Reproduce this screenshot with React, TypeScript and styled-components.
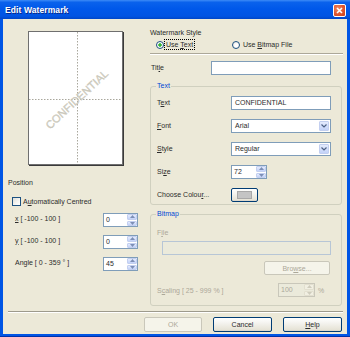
import React from 'react';
import styled, { createGlobalStyle, css } from 'styled-components';

const GlobalStyle = createGlobalStyle`
  html, body {
    margin: 0;
    padding: 0;
    background: #ffffff;
  }
  body {
    font-family: 'Liberation Sans', Arial, sans-serif;
    font-size: 7px;
    color: #2b2b2b;
  }
`;

const Window = styled.div`
  width: 350px;
  height: 337px;
  background: #0055e5;
  display: flex;
  flex-direction: column;
  overflow: hidden;
  border-bottom: 1px solid #0031a8;
  box-sizing: border-box;
`;

const TitleBar = styled.div`
  height: 19px;
  flex: none;
  display: flex;
  align-items: center;
  justify-content: space-between;
  padding: 1px 4px 0 5px;
  box-sizing: border-box;
  background: linear-gradient(
    #3d8bf7 0%,
    #0a62ec 12%,
    #0058ea 45%,
    #0054e3 85%,
    #0046c8 100%
  );
`;

const TitleText = styled.span`
  color: #ffffff;
  font-weight: bold;
  font-size: 8.5px;
  text-shadow: 1px 1px 0 #0a2a8a;
  letter-spacing: 0.1px;
`;

const CloseButton = styled.div`
  width: 13px;
  height: 13px;
  box-sizing: border-box;
  border: 1px solid #ffffff;
  border-radius: 2px;
  background: radial-gradient(circle at 35% 35%, #f08a62 0%, #e0562f 55%, #c8401c 100%);
  display: flex;
  align-items: center;
  justify-content: center;
`;

const Client = styled.div`
  margin: 0 3px 2px;
  height: 315px;
  background: #ece9d8;
  display: flex;
  flex-direction: column;
`;

const Main = styled.div`
  display: flex;
  height: 286px;
`;

const LeftCol = styled.div`
  width: 147px;
  display: flex;
  flex-direction: column;
`;

const RightCol = styled.div`
  width: 193px;
  display: flex;
  flex-direction: column;
`;

const Preview = styled.div`
  margin: 12px 0 0 25px;
  width: 95px;
  height: 134px;
  box-sizing: border-box;
  background: #ffffff;
  border: 1px solid #6f6f6f;
  box-shadow: 1px 1px 0 #3a3a3a;
`;

const Label = styled.div<{ $disabled?: boolean }>`
  height: 12px;
  line-height: 12px;
  white-space: nowrap;
  color: ${(p) => (p.$disabled ? '#aca899' : 'inherit')};
`;

const PositionLabel = styled(Label)`
  margin: 12px 0 0 5px;
`;

const CheckRow = styled.label`
  margin: 6px 0 0 9px;
  height: 12px;
  display: flex;
  align-items: center;
  gap: 2px;
  white-space: nowrap;
`;

const CheckBox = styled.span`
  width: 9px;
  height: 9px;
  box-sizing: border-box;
  border: 1px solid #1c5180;
  background: linear-gradient(135deg, #dcdcd7 0%, #f6f6f3 60%, #ffffff 100%);
`;

const SpinGrid = styled.div`
  margin: 6px 0 0 12px;
  display: grid;
  grid-template-columns: 88px 35px;
  grid-auto-rows: 14px;
  row-gap: 8px;
  align-items: center;
`;

const SpinLabel = styled(Label)`
  margin-top: -3px;
`;

const Spin = styled.div<{ $w: number; $disabled?: boolean }>`
  width: ${(p) => p.$w}px;
  height: 14px;
  box-sizing: border-box;
  display: flex;
  border: 1px solid ${(p) => (p.$disabled ? '#c9c7ba' : '#7f9db9')};
  background: ${(p) => (p.$disabled ? '#ebeadb' : '#ffffff')};
  color: ${(p) => (p.$disabled ? '#aca899' : 'inherit')};
`;

const SpinValue = styled.div`
  flex: 1;
  line-height: 12px;
  padding-left: 2px;
`;

const SpinButtons = styled.div<{ $disabled?: boolean }>`
  width: 10px;
  display: flex;
  flex-direction: column;
  gap: 1px;
  padding: 0 0 0 1px;
  background: ${(p) => (p.$disabled ? '#ebeadb' : '#ffffff')};
`;

const SpinHalf = styled.div<{ $disabled?: boolean }>`
  flex: 1;
  display: flex;
  align-items: center;
  justify-content: center;
  border-radius: 1px;
  ${(p) =>
    p.$disabled
      ? css`
          background: #f1efe2;
          border: 1px solid #e2dfcf;
        `
      : css`
          background: linear-gradient(#e4ebfd, #c3d2f8);
          border: 1px solid #c3cff0;
        `}
  box-sizing: border-box;
`;

const Heading = styled(Label)`
  margin-top: 8px;
`;

const RadioRow = styled.div`
  margin: 1px 0 0 6px;
  height: 12px;
  display: flex;
  align-items: center;
`;

const RadioItem = styled.label<{ $w?: number }>`
  display: flex;
  align-items: center;
  gap: 1px;
  white-space: nowrap;
  width: ${(p) => (p.$w ? `${p.$w}px` : 'auto')};
`;

const RadioCircle = styled.span<{ $checked?: boolean }>`
  width: 8px;
  height: 8px;
  box-sizing: border-box;
  border-radius: 50%;
  border: 1px solid #1c5180;
  background: ${(p) =>
    p.$checked
      ? 'radial-gradient(circle, #3ed13e 0%, #21a121 35%, #ffffff 42%, #ffffff 100%)'
      : 'radial-gradient(circle at 60% 60%, #ffffff 30%, #e0e0da 100%)'};
`;

const FocusText = styled.span`
  outline: 1px dotted #000;
  outline-offset: 0;
  padding: 0 1px;
  line-height: 9px;
`;

const Divider = styled.div`
  margin-top: 4px;
  height: 2px;
  box-sizing: border-box;
  border-top: 1px solid #aca899;
  border-bottom: 1px solid #ffffff;
`;

const TitleRow = styled.div`
  margin: 6px 0 0 1px;
  display: grid;
  grid-template-columns: 60px 120px;
  height: 14px;
  align-items: center;
`;

const Field = styled.div<{ $disabled?: boolean }>`
  height: 14px;
  box-sizing: border-box;
  border: 1px solid ${(p) => (p.$disabled ? '#b7c6d6' : '#7f9db9')};
  background: ${(p) => (p.$disabled ? '#ebeadb' : '#ffffff')};
  line-height: 12px;
  padding-left: 3px;
  white-space: nowrap;
`;

const Group = styled.fieldset<{ $top: number }>`
  margin: ${(p) => p.$top}px 0 0 0;
  width: 192px;
  box-sizing: border-box;
  border: 1px solid #d0d0bf;
  border-radius: 3px;
  padding: 4px 10px 2px 6px;
  min-width: 0;
`;

const Legend = styled.legend`
  color: #0046d5;
  height: 12px;
  line-height: 12px;
  padding: 0 1px;
  margin-left: -1px;
`;

const GroupGrid = styled.div`
  display: grid;
  grid-template-columns: 74px 100px;
  grid-auto-rows: 14px;
  row-gap: 9px;
  align-items: center;
`;

const Select = styled(Field)`
  display: flex;
  align-items: center;
  padding-right: 1px;
  justify-content: space-between;
`;

const DropButton = styled.span`
  width: 10px;
  height: 10px;
  box-sizing: border-box;
  border-radius: 1px;
  border: 1px solid #c3cff0;
  background: linear-gradient(#e4ebfd, #c3d2f8);
  display: flex;
  align-items: center;
  justify-content: center;
`;

const XPButton = styled.button<{ $w: number; $disabled?: boolean }>`
  width: ${(p) => p.$w}px;
  height: 14px;
  padding: 0;
  font: inherit;
  font-size: 7px;
  box-sizing: border-box;
  border-radius: 2px;
  display: flex;
  align-items: center;
  justify-content: center;
  ${(p) =>
    p.$disabled
      ? css`
          border: 1px solid #c9c7ba;
          background: #f5f4ea;
          color: #aca899;
        `
      : css`
          border: 1px solid #003c74;
          background: linear-gradient(#ffffff 0%, #f4f3ee 40%, #e6e3d6 90%, #d6d0c5 100%);
          color: #2b2b2b;
        `}
`;

const Swatch = styled.span`
  width: 13px;
  height: 6px;
  background: #c4c4c4;
  border: 1px solid #a8a8a8;
`;

const FileField = styled(Field)`
  margin: 2px 0 0 5px;
`;

const BrowseRow = styled.div`
  margin-top: 6px;
  display: flex;
  justify-content: flex-end;
  padding-right: 1px;
`;

const ScalingRow = styled.div`
  margin: 8px 0 6px 0;
  display: grid;
  grid-template-columns: 118px auto auto;
  column-gap: 3px;
  justify-content: start;
  height: 14px;
  align-items: center;
  color: #aca899;
`;

const BottomDivider = styled(Divider)`
  margin: 6px 4px 0 5px;
  border-top-color: #9d9a8c;
`;

const ButtonRow = styled.div`
  margin-top: 4px;
  display: flex;
  justify-content: flex-end;
  gap: 11px;
  padding-right: 5px;
  button {
    height: 15px;
  }
`;

const U = styled.span`
  text-decoration: underline;
`;

const Tri = ({ up, color = '#7d8fb6' }: { up?: boolean; color?: string }) => (
  <svg width="5" height="3" viewBox="0 0 5 3">
    <path d={up ? 'M0 3 L2.5 0 L5 3 Z' : 'M0 0 L2.5 3 L5 0 Z'} fill={color} />
  </svg>
);

const Chevron = () => (
  <svg width="6" height="4" viewBox="0 0 6 4">
    <path d="M0.5 0.5 L3 3 L5.5 0.5" fill="none" stroke="#4d6185" strokeWidth="1.2" />
  </svg>
);

const SpinBox = ({ value, w, disabled }: { value: string; w: number; disabled?: boolean }) => (
  <Spin $w={w} $disabled={disabled}>
    <SpinValue>{value}</SpinValue>
    <SpinButtons $disabled={disabled}>
      <SpinHalf $disabled={disabled}>
        <Tri up color={disabled ? '#cfccbd' : '#7d8fb6'} />
      </SpinHalf>
      <SpinHalf $disabled={disabled}>
        <Tri color={disabled ? '#cfccbd' : '#7d8fb6'} />
      </SpinHalf>
    </SpinButtons>
  </Spin>
);

const PagePreview = () => (
  <Preview>
    <svg width="93" height="132" viewBox="0 0 93 132">
      <line x1="48.5" y1="0" x2="48.5" y2="132" stroke="#a9a79c" strokeDasharray="1.5 1.5" />
      <line x1="0" y1="67.5" x2="93" y2="67.5" stroke="#a9a79c" strokeDasharray="1.5 1.5" />
      <text
        x="48.5"
        y="68"
        transform="rotate(-43 48.5 68)"
        textAnchor="middle"
        dominantBaseline="middle"
        fontFamily="'Liberation Sans', Arial, sans-serif"
        fontSize="11"
        fill="#d2cfc2"
        stroke="#c3c0b2"
        strokeWidth="0.3"
      >
        CONFIDENTIAL
      </text>
    </svg>
  </Preview>
);

const App = () => (
  <>
    <GlobalStyle />
    <Window>
      <TitleBar>
        <TitleText>Edit Watermark</TitleText>
        <CloseButton>
          <svg width="7" height="7" viewBox="0 0 7 7">
            <path d="M1 1 L6 6 M6 1 L1 6" stroke="#ffffff" strokeWidth="1.6" />
          </svg>
        </CloseButton>
      </TitleBar>
      <Client>
        <Main>
          <LeftCol>
            <PagePreview />
            <PositionLabel>Position</PositionLabel>
            <CheckRow>
              <CheckBox />
              <span>
                A<U>u</U>tomatically Centred
              </span>
            </CheckRow>
            <SpinGrid>
              <SpinLabel>
                <U>x</U> [ -100 - 100 ]
              </SpinLabel>
              <SpinBox value="0" w={35} />
              <SpinLabel>
                <U>y</U> [ -100 - 100 ]
              </SpinLabel>
              <SpinBox value="0" w={35} />
              <SpinLabel>Angle [ 0 - 359 ° ]</SpinLabel>
              <SpinBox value="45" w={35} />
            </SpinGrid>
          </LeftCol>
          <RightCol>
            <Heading>Watermark Style</Heading>
            <RadioRow>
              <RadioItem $w={76}>
                <RadioCircle $checked />
                <FocusText>
                  Use <U>T</U>ext
                </FocusText>
              </RadioItem>
              <RadioItem>
                <RadioCircle />
                <span>
                  &nbsp;Use <U>B</U>itmap File
                </span>
              </RadioItem>
            </RadioRow>
            <Divider />
            <TitleRow>
              <Label>
                Tit<U>l</U>e
              </Label>
              <Field />
            </TitleRow>
            <Group $top={5}>
              <Legend>Text</Legend>
              <GroupGrid>
                <Label>
                  T<U>e</U>xt
                </Label>
                <Field>CONFIDENTIAL</Field>
                <Label>
                  <U>F</U>ont
                </Label>
                <Select>
                  <span>Arial</span>
                  <DropButton>
                    <Chevron />
                  </DropButton>
                </Select>
                <Label>
                  <U>S</U>tyle
                </Label>
                <Select>
                  <span>Regular</span>
                  <DropButton>
                    <Chevron />
                  </DropButton>
                </Select>
                <Label>
                  Si<U>z</U>e
                </Label>
                <SpinBox value="72" w={36} />
                <Label>
                  Choose Colou<U>r</U>...
                </Label>
                <XPButton $w={27}>
                  <Swatch />
                </XPButton>
              </GroupGrid>
            </Group>
            <Group $top={3}>
              <Legend>Bitmap</Legend>
              <Label $disabled style={{ marginTop: 3 }}>
                F<U>i</U>le
              </Label>
              <FileField $disabled />
              <BrowseRow>
                <XPButton $w={66} $disabled>
                  Bro<U>w</U>se...
                </XPButton>
              </BrowseRow>
              <ScalingRow>
                <span>
                  S<U>c</U>aling [ 25 - 999 % ]
                </span>
                <SpinBox value="100" w={37} disabled />
                <span>%</span>
              </ScalingRow>
            </Group>
          </RightCol>
        </Main>
        <BottomDivider />
        <ButtonRow>
          <XPButton $w={58} $disabled>
            OK
          </XPButton>
          <XPButton $w={59}>Cancel</XPButton>
          <XPButton $w={59}>
            <U>H</U>elp
          </XPButton>
        </ButtonRow>
      </Client>
    </Window>
  </>
);

export default App;
